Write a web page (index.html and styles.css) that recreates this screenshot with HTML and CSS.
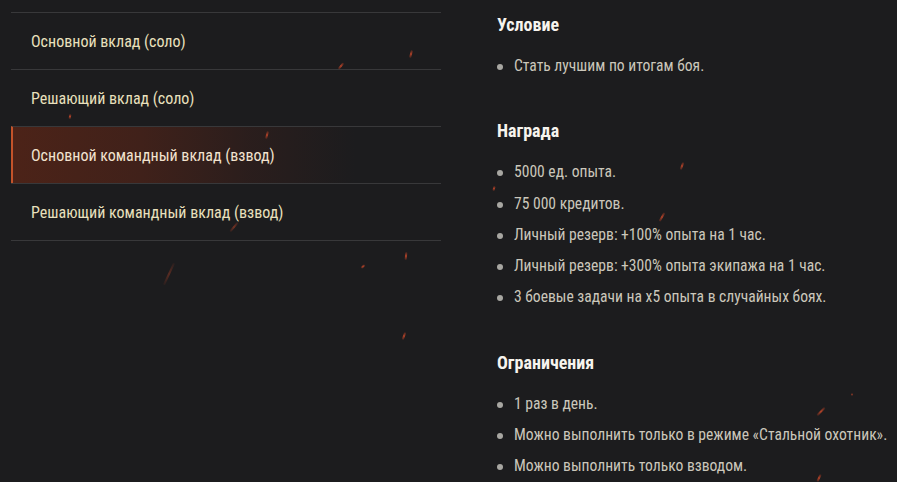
FILE: index.html
```html
<!DOCTYPE html>
<html lang="ru">
<head>
<meta charset="utf-8">
<title>Задачи</title>
<link rel="stylesheet" href="styles.css">
</head>
<body>
<div class="page">
  <nav class="tabs">
    <div class="tab">Основной вклад (соло)</div>
    <div class="tab">Решающий вклад (соло)</div>
    <div class="tab tab-active">Основной командный вклад (взвод)</div>
    <div class="tab">Решающий командный вклад (взвод)</div>
  </nav>
  <main class="details">
    <section class="block">
      <h2 class="block-title">Условие</h2>
      <ul class="block-list">
        <li>Стать лучшим по итогам боя.</li>
      </ul>
    </section>
    <section class="block">
      <h2 class="block-title">Награда</h2>
      <ul class="block-list">
        <li>5000 ед. опыта.</li>
        <li>75 000 кредитов.</li>
        <li>Личный резерв: +100% опыта на 1 час.</li>
        <li>Личный резерв: +300% опыта экипажа на 1 час.</li>
        <li>3 боевые задачи на x5 опыта в случайных боях.</li>
      </ul>
    </section>
    <section class="block">
      <h2 class="block-title">Ограничения</h2>
      <ul class="block-list">
        <li>1 раз в день.</li>
        <li>Можно выполнить только в режиме «Стальной охотник».</li>
        <li>Можно выполнить только взводом.</li>
      </ul>
    </section>
  </main>
</div>
<div class="sparks" aria-hidden="true">
  <span class="spark" style="left:340px;top:62px;transform:rotate(40deg)"></span>
  <span class="spark" style="left:410px;top:50px;transform:rotate(15deg)"></span>
  <span class="spark" style="left:69px;top:114px;height:5px;transform:rotate(10deg)"></span>
  <span class="spark" style="left:266px;top:131px;transform:rotate(15deg)"></span>
  <span class="spark" style="left:233px;top:221px;height:12px;opacity:.5;transform:rotate(40deg)"></span>
  <span class="spark spark-long" style="left:168px;top:262px;transform:rotate(25deg)"></span>
  <span class="spark" style="left:362px;top:264px;height:5px;transform:rotate(50deg)"></span>
  <span class="spark" style="left:405px;top:252px;transform:rotate(5deg)"></span>
  <span class="spark" style="left:403px;top:332px;transform:rotate(20deg)"></span>
  <span class="spark" style="left:681px;top:162px;transform:rotate(20deg)"></span>
  <span class="spark" style="left:493px;top:186px;height:5px;transform:rotate(15deg)"></span>
  <span class="spark" style="left:661px;top:212px;height:10px;transform:rotate(30deg)"></span>
  <span class="spark" style="left:820px;top:406px;height:11px;transform:rotate(45deg)"></span>
  <span class="spark" style="left:851px;top:393px;height:3px;opacity:.5"></span>
  <span class="spark" style="left:818px;top:474px;transform:rotate(25deg)"></span>
</div>
</body>
</html>
```
FILE: styles.css
```css
* { box-sizing: border-box; }

html, body {
  margin: 0;
  padding: 0;
  background: #1c1c1e;
  height: 100%;
  overflow: hidden;
}

body {
  font-family: "Roboto Condensed", "Liberation Sans Narrow", "DejaVu Sans Condensed", Roboto, sans-serif;
  font-stretch: condensed;
  color: #e7deb9;
  position: relative;
}

.page {
  display: flex;
  align-items: flex-start;
}

.tabs {
  margin-left: 11px;
  margin-top: 12px;
  width: 430px;
  flex: none;
  border-bottom: 1px solid #38383a;
}

.tab {
  height: 57px;
  border-top: 1px solid #38383a;
  display: flex;
  align-items: center;
  padding-left: 20px;
  font-size: 16px;
  color: #e9e0bd;
}

.tab-active {
  border-left: 2px solid #c4532a;
  padding-left: 18px;
  background: linear-gradient(90deg, #4c2318 0%, #40211a 30%, rgba(46, 30, 28, 0.8) 55%, rgba(28, 28, 30, 0) 80%);
  color: #f2e3cf;
}

.details {
  margin-left: 56px;
  padding-top: 15px;
}

.block + .block {
  margin-top: 39px;
}

.block-title {
  margin: 0;
  font-size: 18px;
  line-height: 20px;
  font-weight: 700;
  color: #f7f4ee;
}

.block-list {
  list-style: none;
  margin: 16px 0 0;
  padding: 0;
}

.block-list li {
  position: relative;
  padding-left: 17px;
  font-size: 15.6px;
  line-height: 31.25px;
  color: #cbc7bb;
}

.block-list li::before {
  content: "";
  position: absolute;
  left: 0;
  top: 13px;
  width: 6px;
  height: 6px;
  border-radius: 50%;
  background: #a8a7a2;
}

.sparks {
  position: absolute;
  inset: 0;
  pointer-events: none;
}

.spark {
  position: absolute;
  width: 2px;
  height: 8px;
  border-radius: 1px;
  background: linear-gradient(180deg, rgba(200, 60, 30, 0.2), #c9482a, rgba(200, 60, 30, 0.2));
  opacity: 0.85;
}

.spark-long {
  height: 24px;
  opacity: 0.35;
}
```
